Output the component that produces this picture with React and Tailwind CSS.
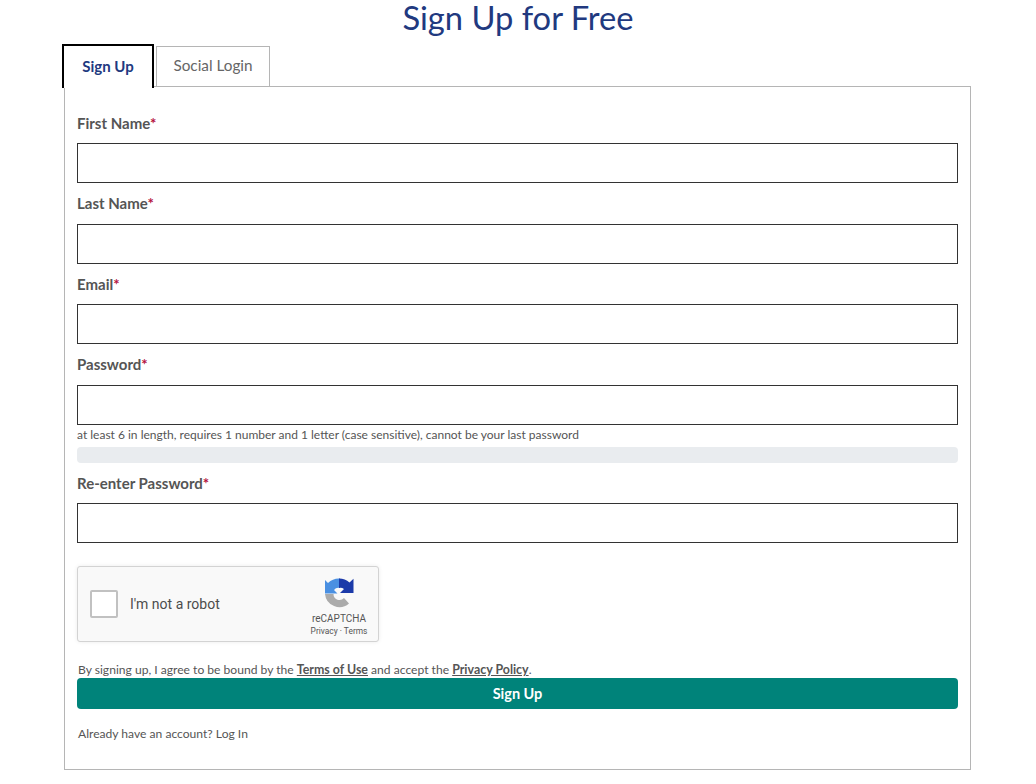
import React from 'react';

const fields = [
  { name: 'First Name', className: 'mb-[10px]' },
  { name: 'Last Name', className: 'mt-[10px] mb-[11px]' },
  { name: 'Email', className: 'mt-[10px] mb-[10px]' },
  { name: 'Password', className: 'mt-[10px] mb-[11px]' },
];

function Label({ children, className = '' }) {
  return (
    <label className={`block h-[20px] text-[15px] leading-[20px] font-bold text-[#555] ${className}`}>
      {children}<span className="text-[#b5123e]">*</span>
    </label>
  );
}

function TextInput() {
  return <input type="text" className="block w-full h-[40px] border border-[#333] bg-white" />;
}

function RecaptchaLogo() {
  return (
    <svg width="32" height="32" viewBox="0 0 32 32">
      <path d="M17 0.5A15.5 15.5 0 0 0 5 5L2 2V15.5H14.5L11 12A5.5 5.5 0 0 1 17 10Z" fill="#4a90e2" />
      <path d="M16 0.5A15.5 15.5 0 0 1 26.5 4.5L30.5 0.8V15H17L21 11A6 6 0 0 0 16 10Z" fill="#1c3aa9" />
      <path d="M2 16H10.5A6 6 0 0 0 21 20L26 25.5A14.5 14.5 0 0 1 2 16Z" fill="#ababab" />
    </svg>
  );
}

function Recaptcha() {
  return (
    <div className="flex items-center w-[302px] h-[76px] rounded-[3px] border border-[#d3d3d3] bg-[#f9f9f9] shadow-[0_0_4px_rgba(0,0,0,0.08)] font-['Roboto',sans-serif]">
      <div className="ml-[12px] w-[28px] h-[28px] rounded-[2px] border-2 border-[#c1c1c1] bg-white" />
      <span className="ml-[12px] mt-[1px] text-[14px] text-[#4c4c4c]">I'm not a robot</span>
      <div className="self-start ml-auto mt-[11px] mr-[4px] w-[70px] flex flex-col items-center">
        <RecaptchaLogo />
        <div className="mt-[2px] text-[10px] leading-[13px] text-[#555]">reCAPTCHA</div>
        <div className="text-[8.4px] leading-[12px] text-[#555]">Privacy · Terms</div>
      </div>
    </div>
  );
}

export default function App() {
  return (
    <div className="min-h-[784px] bg-white font-['Lato',sans-serif] text-[#555]">
      <h1 className="h-[44px] text-center text-[32.7px] leading-[36px] text-[#21397f]">Sign Up for Free</h1>

      <div className="mx-[64px] w-[907px]">
        {/* tabs */}
        <div className="relative z-10 -ml-[2px] flex items-start gap-[2px] h-[42px]">
          <div className="w-[92px] h-[44px] border-2 border-b-0 border-black bg-white text-center text-[15px] leading-[40px] font-bold text-[#21397f]">Sign Up</div>
          <div className="w-[114px] h-[40px] mt-[2px] border border-b-0 border-[#b5b5b5] bg-white text-center text-[15.3px] leading-[36px] text-[#666]">Social Login</div>
        </div>

        <div className="h-[684px] border border-[#b5b5b5] px-[12px] pt-[26px]">
          <div className="flex flex-col">
            {fields.map(f => (
              <div key={f.name}>
                <Label className={f.className}>{f.name}</Label>
                <TextInput />
              </div>
            ))}
          </div>

          <p className="mt-[1px] text-[12px] leading-[18px] text-[#555]">at least 6 in length, requires 1 number and 1 letter (case sensitive), cannot be your last password</p>
          <div className="mt-[3px] h-[16px] rounded-[4px] bg-[#e9ecef]" />

          <Label className="mt-[10px] mb-[10px]">Re-enter Password</Label>
          <TextInput />

          <div className="mt-[23px]"><Recaptcha /></div>

          <p className="mt-[20px] h-[16px] pl-[1px] text-[12.1px] leading-[16px] text-[#555]">
            By signing up, I agree to be bound by the <a className="text-[12.4px] font-bold underline">Terms of Use</a> and accept the <a className="text-[12.4px] font-bold underline">Privacy Policy</a>.
          </p>
          <button className="block w-full h-[31px] rounded-[4px] bg-[#00837a] text-center text-[14.5px] font-bold text-white">Sign Up</button>
          <p className="mt-[16px] pl-[1px] text-[12.1px] leading-[18px] text-[#555]">Already have an account? Log In</p>
        </div>
      </div>
    </div>
  );
}
